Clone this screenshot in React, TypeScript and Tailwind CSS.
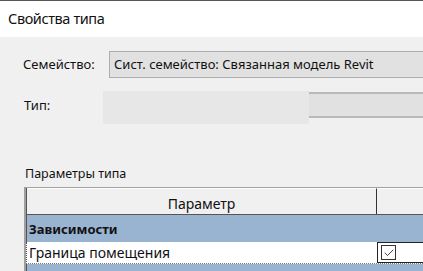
import { Check } from "lucide-react";

const font = { fontFamily: '"Noto Sans", "Open Sans", sans-serif' };

export default function App() {
  return (
    <div className="h-[271px] w-[423px] overflow-hidden bg-[#f0f0f0] text-[14px] text-[#111]" style={font}>
      <div className="flex h-[37px] items-center border-t border-[#555] bg-white pl-[8px] text-[14.5px] tracking-[-0.4px]">
        Свойства типа
      </div>

      <div className="mt-[14px] flex items-center pl-[23px] text-[13px]">
        <span className="w-[86px]">Семейство:</span>
        <div className="flex h-[27px] flex-1 items-center border border-r-0 border-[#adadad] bg-[#e1e1e1] pl-[4px]">
          Сист. семейство: Связанная модель Revit
        </div>
      </div>

      <div className="mt-[13px] flex items-start pl-[24px] text-[13px]">
        <span className="mt-[5px] w-[79px]">Тип:</span>
        <div className="h-[33px] w-[206px] bg-[#e7e7e7]" />
        <div className="mt-[1px] h-[26px] flex-1 border-y-2 border-[#b9b9b9] bg-[#e1e1e1]" />
      </div>

      <div className="mt-[42px] pl-[25px] text-[12.5px] leading-[16px]">Параметры типа</div>

      <div className="mt-[5px] ml-[24px] border-l-2 border-t border-[#a0a0a0]">
        <div className="flex h-[27px] border-b border-l border-[#555] bg-[#f0f0f0]">
          <div className="flex w-[350px] items-center justify-center border-r border-t border-[#333] border-t-white pt-[3px]">
            Параметр
          </div>
          <div className="flex-1 border-t border-white" />
        </div>
        <div className="flex h-[27px] items-center border-l border-[#555] bg-[#99b4d1] pl-[2px] pt-[2px] text-[13px] font-bold">
          Зависимости
        </div>
        <div className="flex h-[22px] border-b border-l border-dotted border-b-[#777] border-l-[#555] bg-white">
          <div className="flex w-[350px] items-center pl-[2px]">Граница помещения</div>
          <div className="flex flex-1 items-center border border-r-0 border-[#222] pl-[3px]">
            <div className="grid h-[15px] w-[15px] place-items-center border border-[#333] bg-white">
              <Check className="h-[12px] w-[12px]" strokeWidth={1.6} />
            </div>
          </div>
        </div>
        <div className="h-[10px] border-l border-[#555] bg-[#99b4d1]" />
      </div>
    </div>
  );
}
